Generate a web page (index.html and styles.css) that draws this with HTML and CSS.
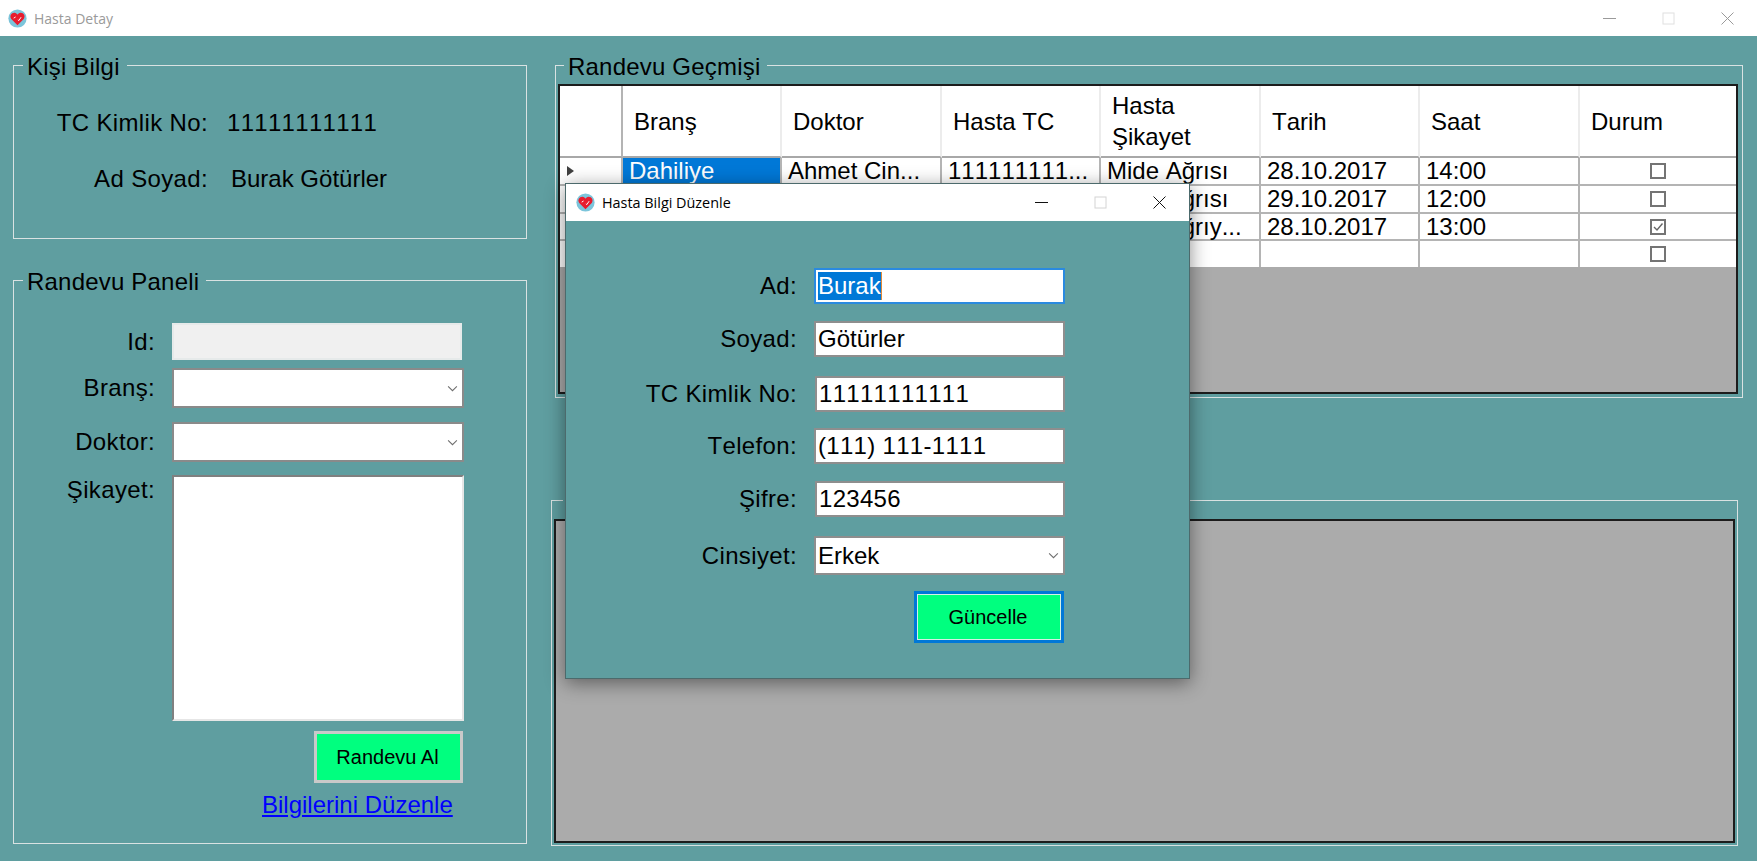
FILE: index.html
```html
<!DOCTYPE html>
<html lang="tr">
<head>
	<meta charset="UTF-8">
	<title>Hasta Detay</title>
	<link rel="stylesheet" href="styles.css">
</head>
<body>

	<svg class="defs" width="0" height="0">
		<symbol id="heart" viewBox="0 0 20 20">
			<circle cx="10" cy="10" r="9.6" fill="#7cc5db"/>
			<path d="M1.6 7 A9.6 9.6 0 0 0 6 18.7 A10 10 0 0 1 1.6 7Z" fill="#5fa6be"/>
			<path d="M10 17 L3.4 10.6 C1.2 7.2 3.6 3.8 6.8 4 C8.4 4.1 9.4 5 10 6 C10.6 5 11.6 4.1 13.2 4 C16.4 3.8 18.8 7.2 16.6 10.6 Z" fill="#e81c2e"/>
			<path d="M6 9.6 L8 8.4 M10.4 11.4 L11.4 12.2 L13.8 8.6" fill="none" stroke="#fff" stroke-width="1"/>
		</symbol>
		<symbol id="chev" viewBox="0 0 12 8">
			<path d="M1 1.5 L6 6.5 L11 1.5" fill="none" stroke="#6e6e6e" stroke-width="1.2"/>
		</symbol>
	</svg>

	<div class="window">
		<div class="titlebar">
			<svg class="app-icon"><use href="#heart"/></svg>
			<span class="title-text">Hasta Detay</span>
			<div class="win-btns">
				<svg class="win-btn" viewBox="0 0 13 13"><path d="M0 6.5H13" stroke="#9a9a9a"/></svg>
				<svg class="win-btn" viewBox="0 0 13 13"><rect x="1" y="1" width="11" height="11" fill="none" stroke="#e0e0e0"/></svg>
				<svg class="win-btn" viewBox="0 0 13 13"><path d="M0.5 0.5L12.5 12.5M12.5 0.5L0.5 12.5" stroke="#9a9a9a"/></svg>
			</div>
		</div>

		<div class="desk">
			<div class="col-left">
				<fieldset class="group group-kisi">
					<legend>Kişi Bilgi</legend>
					<div class="info-row">
						<span class="info-label">TC Kimlik No:</span>
						<span class="info-value num">11111111111</span>
					</div>
					<div class="info-row">
						<span class="info-label">Ad Soyad:</span>
						<span class="info-value info-value-ad">Burak Götürler</span>
					</div>
				</fieldset>

				<fieldset class="group group-panel">
					<legend>Randevu Paneli</legend>
					<div class="form-row">
						<label class="form-label">Id:</label>
						<div class="box box-off"></div>
					</div>
					<div class="form-row row-brans">
						<label class="form-label">Branş:</label>
						<div class="box box-combo"><svg class="chev"><use href="#chev"/></svg></div>
					</div>
					<div class="form-row row-doktor">
						<label class="form-label">Doktor:</label>
						<div class="box box-combo"><svg class="chev"><use href="#chev"/></svg></div>
					</div>
					<div class="form-row row-sikayet">
						<label class="form-label">Şikayet:</label>
						<div class="box box-area"></div>
					</div>
					<button class="btn btn-randevu">Randevu Al</button>
					<a class="link" href="#">Bilgilerini Düzenle</a>
				</fieldset>
			</div>

			<div class="col-right">
				<fieldset class="group group-gecmis">
					<legend>Randevu Geçmişi</legend>
					<div class="grid-panel panel-gecmis">
						<table class="grid">
							<colgroup>
								<col class="c-head"><col class="c-159"><col class="c-160"><col class="c-159"><col class="c-160"><col class="c-159"><col class="c-160"><col class="c-156">
							</colgroup>
							<thead>
								<tr>
									<th></th>
									<th>Branş</th>
									<th>Doktor</th>
									<th>Hasta TC</th>
									<th class="th-wrap">Hasta Şikayet</th>
									<th>Tarih</th>
									<th>Saat</th>
									<th>Durum</th>
								</tr>
							</thead>
							<tbody>
								<tr>
									<td class="td-arrow"><span class="arrow"></span></td>
									<td class="td-sel"><div class="cell">Dahiliye</div></td>
									<td><div class="cell">Ahmet Cin...</div></td>
									<td><div class="cell">111111111...</div></td>
									<td><div class="cell">Mide Ağrısı</div></td>
									<td><div class="cell">28.10.2017</div></td>
									<td><div class="cell">14:00</div></td>
									<td class="td-check"><span class="check"></span></td>
								</tr>
								<tr>
									<td></td>
									<td><div class="cell">Dahiliye</div></td>
									<td><div class="cell">Ahmet Cin...</div></td>
									<td><div class="cell">111111111...</div></td>
									<td><div class="cell">Mide Ağrısı</div></td>
									<td><div class="cell">29.10.2017</div></td>
									<td><div class="cell">12:00</div></td>
									<td class="td-check"><span class="check"></span></td>
								</tr>
								<tr class="row-short">
									<td></td>
									<td><div class="cell">Dahiliye</div></td>
									<td><div class="cell">Ahmet Cin...</div></td>
									<td><div class="cell">111111111...</div></td>
									<td><div class="cell">Mide Ağrıy...</div></td>
									<td><div class="cell">28.10.2017</div></td>
									<td><div class="cell">13:00</div></td>
									<td class="td-check">
										<span class="check">
											<svg viewBox="0 0 12 12"><path d="M2 6 L5 9 L10.5 2.5" fill="none" stroke="#666" stroke-width="1.4"/></svg>
										</span>
									</td>
								</tr>
								<tr class="row-new">
									<td></td><td></td><td></td><td></td><td></td><td></td><td></td>
									<td class="td-check"><span class="check"></span></td>
								</tr>
							</tbody>
						</table>
					</div>
				</fieldset>

				<fieldset class="group group-aktif">
					<legend>Aktif Randevular</legend>
					<div class="grid-panel panel-aktif"></div>
				</fieldset>
			</div>
		</div>

		<!-- dialog on top of the main window -->
		<div class="dialog">
			<div class="titlebar dialog-bar">
				<svg class="app-icon"><use href="#heart"/></svg>
				<span class="title-text dialog-title">Hasta Bilgi Düzenle</span>
				<div class="win-btns">
					<svg class="win-btn" viewBox="0 0 13 13"><path d="M0 6.5H13" stroke="#111"/></svg>
					<svg class="win-btn" viewBox="0 0 13 13"><rect x="1" y="1" width="11" height="11" fill="none" stroke="#d4d4d4"/></svg>
					<svg class="win-btn" viewBox="0 0 13 13"><path d="M0.5 0.5L12.5 12.5M12.5 0.5L0.5 12.5" stroke="#111"/></svg>
				</div>
			</div>
			<div class="dialog-form">
				<div class="dlg-row">
					<label class="dlg-label">Ad:</label>
					<div class="box dlg-field dlg-focus"><span class="sel">Burak</span></div>
				</div>
				<div class="dlg-row">
					<label class="dlg-label">Soyad:</label>
					<div class="box dlg-field">Götürler</div>
				</div>
				<div class="dlg-row dlg-row-gap">
					<label class="dlg-label">TC Kimlik No:</label>
					<div class="box dlg-field dlg-inset num">11111111111</div>
				</div>
				<div class="dlg-row dlg-row-up">
					<label class="dlg-label">Telefon:</label>
					<div class="box dlg-field num">(111) 111-1111</div>
				</div>
				<div class="dlg-row">
					<label class="dlg-label">Şifre:</label>
					<div class="box dlg-field dlg-inset num">123456</div>
				</div>
				<div class="dlg-row dlg-row-gap">
					<label class="dlg-label">Cinsiyet:</label>
					<div class="box dlg-field dlg-combo">Erkek<svg class="chev"><use href="#chev"/></svg></div>
				</div>
				<button class="btn btn-guncelle">Güncelle</button>
			</div>
		</div>
	</div>

</body>
</html>
```

FILE: styles.css
```css
*{
	margin: 0;
	padding: 0;
	box-sizing: border-box;
}
body{
	font-family: "Liberation Sans", Arial, sans-serif;
	font-size: 24px;
	font-kerning: none;
	color: #000;
	overflow: hidden;
}
.defs{
	position: absolute;
}
.num{
	letter-spacing: .3px;
}
.window{
	width: 1757px;
	height: 861px;
	background: #5f9ea0;
	position: relative;
	overflow: hidden;
	display: flex;
	flex-direction: column;
}

/* title bars */
.titlebar{
	height: 36px;
	flex: none;
	background: #fff;
	display: flex;
	align-items: center;
	padding-left: 8px;
}
.app-icon{
	width: 19px;
	height: 19px;
	flex: none;
}
.title-text{
	margin-left: 7px;
	font-family: "Open Sans", "Noto Sans", sans-serif;
	font-size: 14px;
	color: #9a9a9a;
}
.win-btns{
	margin-left: auto;
	display: flex;
	gap: 46px;
	padding-right: 23px;
}
.win-btn{
	width: 13px;
	height: 13px;
}

/* main columns */
.desk{
	flex: 1;
	display: flex;
	gap: 28px;
	padding: 13px 0 0 13px;
}
.col-left{
	width: 514px;
	display: flex;
	flex-direction: column;
	gap: 25px;
}
.col-right{
	width: 1188px;
	display: flex;
	flex-direction: column;
	gap: 86px;
}
.group{
	border: 1px solid #d9e2e2;
	min-width: 0;
}
.group legend{
	margin-left: 9px;
	padding: 4px 7px 0 4px;
	line-height: 28px;
	letter-spacing: .2px;
}
.group-kisi{
	height: 190px;
	padding-top: 28px;
}
.group-panel{
	height: 580px;
	padding-top: 27px;
}
.group-gecmis{
	height: 349px;
	padding: 3px 4px 0 2px;
}
.group-gecmis legend{
	margin-left: 6px;
}
.group-aktif{
	width: 1187px;
	height: 362px;
	margin-left: -4px;
	padding: 3px 2px 0 2px;
}

/* Kişi Bilgi */
.info-row{
	display: flex;
	line-height: 28px;
	margin-bottom: 28px;
}
.info-label{
	width: 194px;
	text-align: right;
	letter-spacing: .35px;
}
.info-value{
	margin-left: 19px;
}
.info-value-ad{
	margin-left: 23px;
}

/* Randevu Paneli */
.form-row{
	display: flex;
	gap: 17px;
}
.row-brans{
	margin-top: 8px;
}
.row-doktor{
	margin-top: 14px;
}
.row-sikayet{
	margin-top: 13px;
}
.form-label{
	width: 141px;
	line-height: 28px;
	text-align: right;
	align-self: center;
	letter-spacing: .35px;
}
.row-sikayet .form-label{
	align-self: flex-start;
	margin-top: 1px;
}
.box{
	background: #fff;
	position: relative;
}
.box-off{
	width: 290px;
	height: 37px;
	background: #f0f0f0;
	border: 2px solid #e6eaea;
}
.box-combo{
	width: 292px;
	height: 40px;
	border: 2px solid #8a8a8a;
	display: flex;
	align-items: center;
	justify-content: flex-end;
	padding-right: 4px;
}
.box-area{
	width: 292px;
	height: 246px;
	border: 2px solid;
	border-color: #808080 #e6e6e6 #e6e6e6 #808080;
}
.chev{
	width: 11px;
	height: 7px;
	flex: none;
}

.btn{
	display: block;
	font-family: inherit;
	font-size: 20px;
	background: #00ff7f;
	color: #000;
}
.btn-randevu{
	width: 149px;
	height: 52px;
	margin: 10px 0 0 300px;
	padding-right: 2px;
	border: 3px solid #c9c9c9;
}
.link{
	display: inline-block;
	margin: 8px 0 0 248px;
	line-height: 28px;
	color: #00f;
}

/* grids */
.grid-panel{
	background: #ababab;
	border: 2px solid #1c1c1c;
}
.panel-gecmis{
	height: 310px;
	overflow: hidden;
}
.panel-aktif{
	height: 324px;
}
.grid{
	width: 1176px;
	table-layout: fixed;
	border-collapse: separate;
	border-spacing: 0;
	background: #fff;
}
.c-head{ width: 63px; }
.c-156{ width: 156px; }
.c-159{ width: 159px; }
.c-160{ width: 160px; }
.grid th{
	height: 72px;
	padding-left: 11px;
	font-weight: normal;
	text-align: left;
	line-height: 31px;
	border-right: 2px solid #ececec;
	border-bottom: 2px solid #a8a8a8;
}
.grid th:first-child{
	border-right-color: #b4b4b4;
}
.grid th:last-child,
.grid td:last-child{
	border-right: 0;
}
.grid th.th-wrap{
	padding-right: 40px;
}
.grid td{
	height: 28px;
	padding: 0;
	vertical-align: top;
	border-right: 2px solid #b4b4b4;
	border-bottom: 2px solid #b4b4b4;
}
.grid .row-short td{
	height: 27px;
}
.grid .row-new td{
	height: 26px;
	border-bottom: 0;
}
.cell{
	padding-left: 6px;
	line-height: 26px;
	white-space: nowrap;
}
.row-short .cell{
	line-height: 25px;
}
.td-sel{
	background: #0078d7;
	color: #fff;
}
.td-arrow{
	position: relative;
}
.arrow{
	position: absolute;
	left: 7px;
	top: 8px;
	border-left: 7px solid #404040;
	border-top: 5px solid transparent;
	border-bottom: 5px solid transparent;
}
.grid .td-check{
	vertical-align: middle;
	text-align: center;
	line-height: 0;
}
.check{
	display: inline-block;
	width: 16px;
	height: 16px;
	border: 2px solid #747474;
	background: #fff;
}
.check svg{
	display: block;
	width: 12px;
	height: 12px;
}

/* dialog window */
.dialog{
	position: absolute;
	left: 565px;
	top: 183px;
	width: 625px;
	height: 496px;
	background: #5f9ea0;
	border: 1px solid #4c6a6c;
	box-shadow: 0 4px 18px rgba(0, 0, 0, .45);
}
.dialog-bar{
	height: 37px;
	padding-left: 10px;
}
.dialog-title{
	margin-left: 7px;
	font-size: 14.4px;
	color: #000;
}
.dialog-form{
	padding-top: 47px;
	display: flex;
	flex-direction: column;
	gap: 17px;
}
.dlg-row{
	display: flex;
	align-items: center;
	gap: 17px;
}
.dlg-row-gap{
	margin-top: 2px;
}
.dlg-row-up{
	margin-top: -1px;
}
.dlg-label{
	width: 231px;
	text-align: right;
	flex: none;
	letter-spacing: .35px;
}
.dlg-field{
	width: 251px;
	height: 36px;
	padding-left: 2px;
	border: 2px solid #8e8e8e;
	display: flex;
	align-items: center;
}
.dlg-inset{
	margin-left: 1px;
	width: 250px;
}
.dlg-focus{
	border-color: #2a8ae0;
}
.dlg-combo{
	height: 39px;
	justify-content: space-between;
	padding-right: 4px;
}
.sel{
	background: #0078d7;
	color: #fff;
	border-right: 1px solid #e08a3a;
}
.btn-guncelle{
	width: 150px;
	height: 52px;
	margin: -1px 0 0 348px;
	padding-right: 2px;
	border: 3px solid #0078d7;
	outline: 1px solid #d6f0e4;
	outline-offset: -4px;
}
```
